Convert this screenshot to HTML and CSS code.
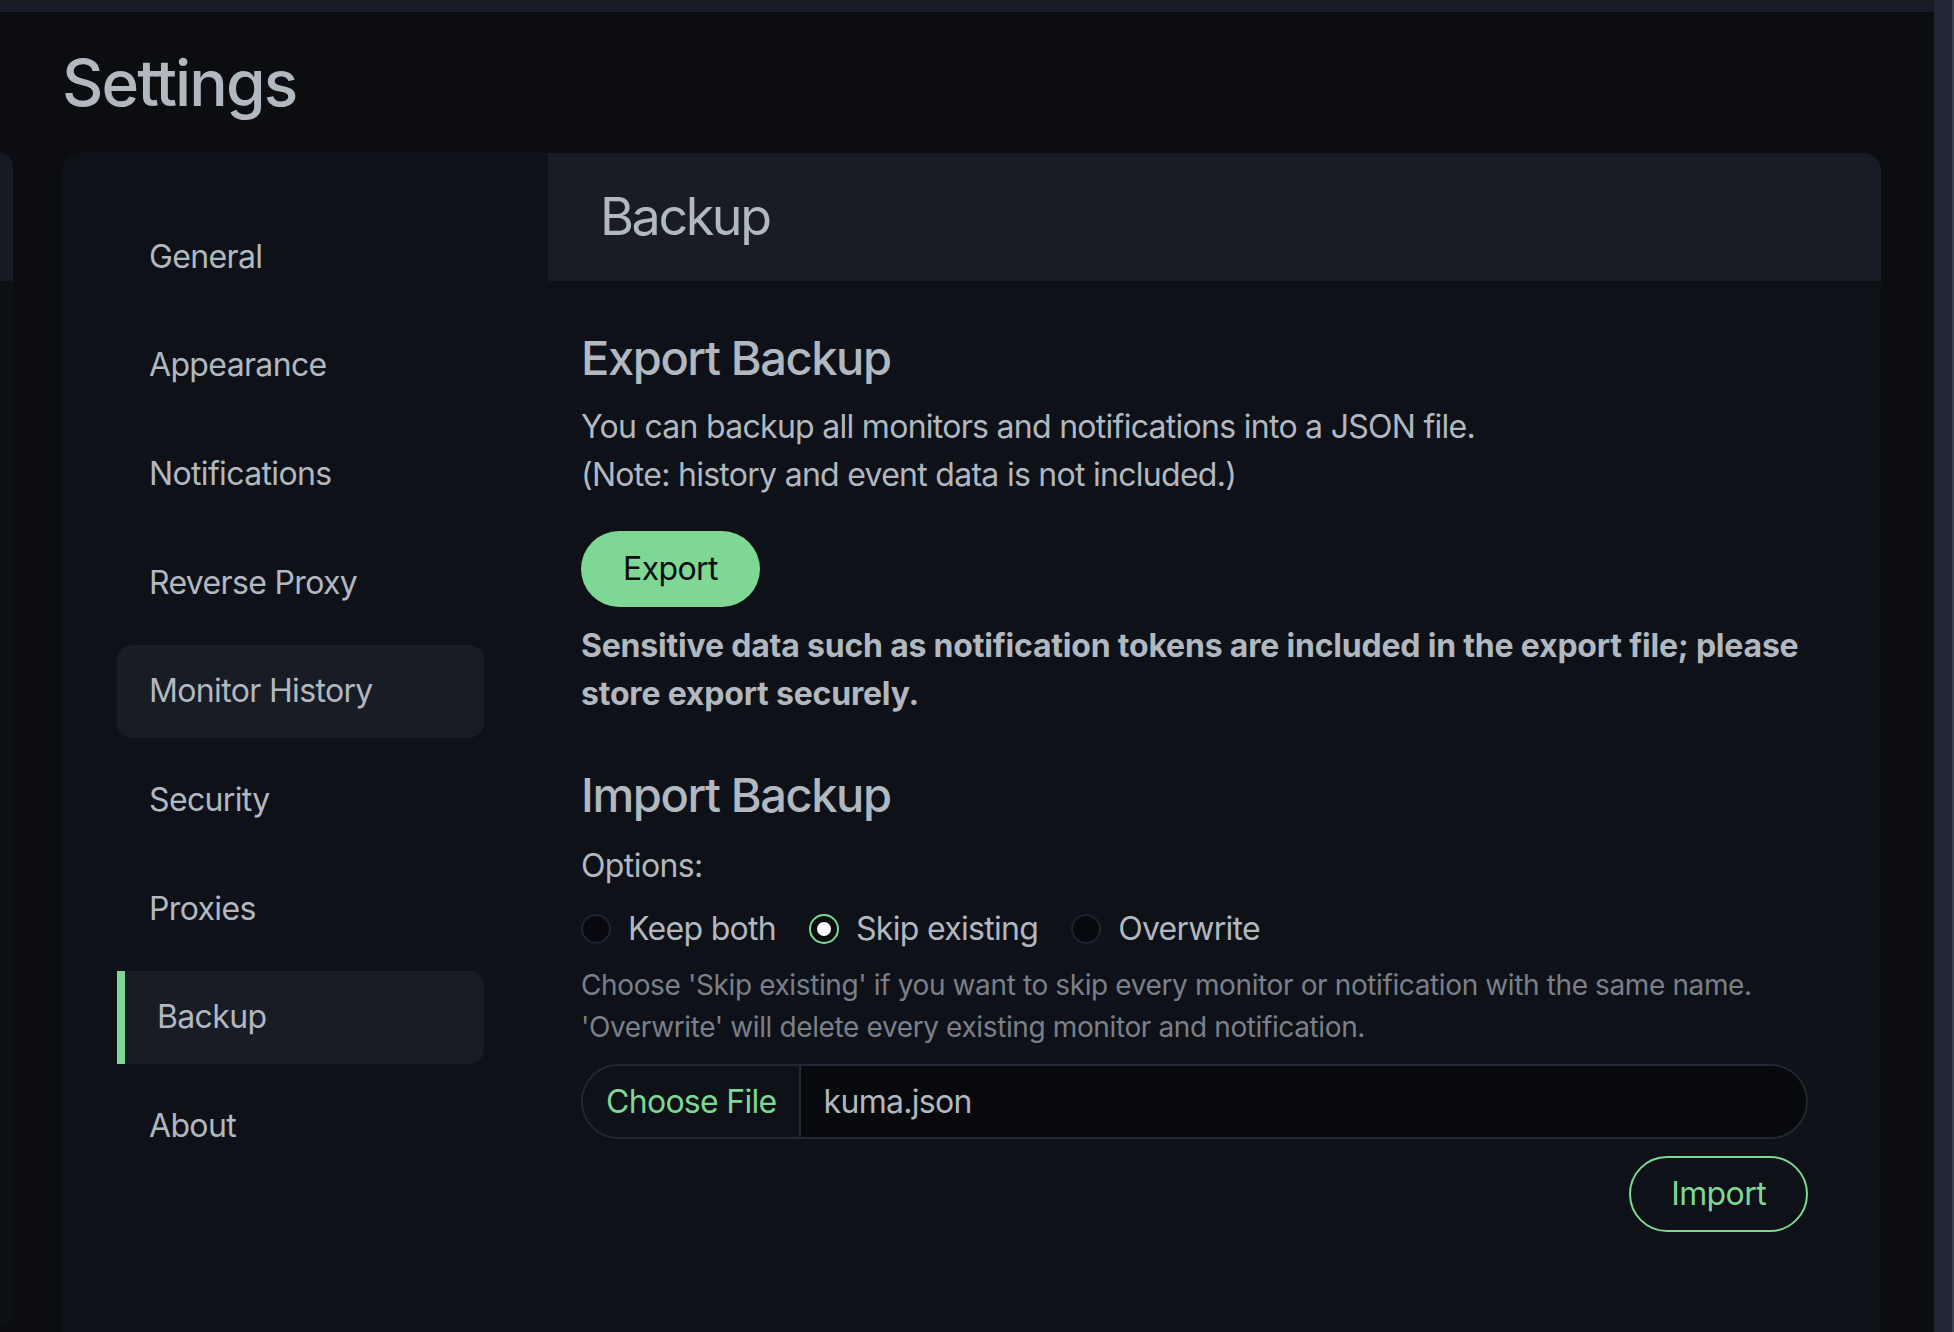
FILE: index.html
```html
<!DOCTYPE html>
<html lang="en">
<head>
<meta charset="utf-8">
<title>Settings - Backup</title>
<link rel="stylesheet" href="styles.css">
</head>
<body>
<div class="viewport">
  <div class="topbar"></div>
  <div class="layout">
    <div class="side-panel">
      <div class="side-panel-head"></div>
      <div class="side-panel-body"></div>
    </div>
    <main class="main">
      <h1 class="page-title">Settings</h1>
      <div class="card">
        <nav class="settings-menu">
          <div class="menu-item">General</div>
          <div class="menu-item">Appearance</div>
          <div class="menu-item">Notifications</div>
          <div class="menu-item">Reverse Proxy</div>
          <div class="menu-item hover">Monitor History</div>
          <div class="menu-item">Security</div>
          <div class="menu-item">Proxies</div>
          <div class="menu-item active">Backup</div>
          <div class="menu-item">About</div>
        </nav>
        <section class="settings-content">
          <div class="content-header">Backup</div>
          <div class="content-body">
            <h4 class="section-title">Export Backup</h4>
            <p class="text">You can backup all monitors and notifications into a JSON file.<br>(Note: history and event data is not included.)</p>
            <button class="btn btn-primary">Export</button>
            <p class="text warning">Sensitive data such as notification tokens are included in the export file; please store export securely.</p>

            <h4 class="section-title import-title">Import Backup</h4>
            <div class="label">Options:</div>
            <div class="radios">
              <label class="radio"><span class="radio-dot"></span><span>Keep both</span></label>
              <label class="radio"><span class="radio-dot checked"></span><span>Skip existing</span></label>
              <label class="radio"><span class="radio-dot"></span><span>Overwrite</span></label>
            </div>
            <div class="help">Choose 'Skip existing' if you want to skip every monitor or notification with the same name.<br>'Overwrite' will delete every existing monitor and notification.</div>
            <div class="file-input">
              <span class="file-btn">Choose File</span>
              <span class="file-name">kuma.json</span>
            </div>
            <div class="import-row">
              <button class="btn btn-outline">Import</button>
            </div>
          </div>
        </section>
      </div>
    </main>
  </div>
</div>
<div class="scrollbar"><div class="scrollbar-edge"></div></div>
</body>
</html>
```

FILE: styles.css
```css
html, body {
  margin: 0;
  height: 100%;
  overflow: hidden;
}
body {
  display: flex;
  background: #0b0d10;
  font-family: Inter, "Noto Sans", sans-serif;
  color: #b1b8c0;
}
.viewport {
  flex: 1;
  display: flex;
  flex-direction: column;
  min-width: 0;
}
.topbar {
  height: 12px;
  background: #181c25;
  flex: none;
}
.layout {
  display: flex;
  flex: 1;
}
.side-panel {
  width: 13px;
  margin-top: 141px;
  height: 1172px;
  display: flex;
  flex-direction: column;
  border-radius: 0 14px 14px 0;
  overflow: hidden;
  background: #0d1015;
  flex: none;
}
.side-panel-head {
  height: 128px;
  background: #161a22;
}
.main {
  flex: 1;
  margin-left: 49px;
  margin-right: 53px;
  padding-top: 33px;
  min-width: 0;
}
.page-title {
  margin: 0 0 31px 0;
  font-size: 64px;
  line-height: 1.2;
  font-weight: 500;
  letter-spacing: -1.9px;
  color: #b1b8c0;
}
.card {
  display: flex;
  background: #0e1117;
  border-radius: 18px;
  min-height: 1250px;
}
.settings-menu {
  width: 486px;
  flex: none;
  box-sizing: border-box;
  padding: 57.5px 64px 0 55px;
  display: flex;
  flex-direction: column;
  gap: 15.67px;
}
.menu-item {
  height: 93px;
  display: flex;
  align-items: center;
  padding-left: 32px;
  border-radius: 15px;
  font-size: 32px;
  line-height: 48px;
  letter-spacing: -0.65px;
  color: #b1b8c0;
}
.menu-item.hover {
  background: #181c25;
}
.menu-item.active {
  background: #181c25;
  border-left: 8px solid #7fd794;
  border-radius: 0 15px 15px 0;
}
.settings-content {
  flex: 1;
  min-width: 0;
}
.content-header {
  height: 128px;
  display: flex;
  align-items: center;
  padding: 0 52px;
  background: #181c25;
  border-radius: 0 18px 0 0;
  font-size: 52px;
  letter-spacing: -2.4px;
}
.content-body {
  padding: 49.5px 73px 0 33px;
}
.section-title {
  margin: 0;
  font-size: 47px;
  line-height: 1.2;
  font-weight: 500;
  letter-spacing: -1.4px;
}
.text {
  margin: 16px 0 0 0;
  font-size: 32px;
  line-height: 48px;
  letter-spacing: -0.72px;
}
.btn {
  font-family: inherit;
  font-size: 32px;
  line-height: 48px;
  letter-spacing: -0.6px;
  padding: 14px 42px;
  border-radius: 999px;
  cursor: pointer;
}
.btn-primary {
  margin-top: 32px;
  background: #7fd794;
  border: none;
  color: #0b0d10;
  height: 76px;
  display: block;
}
.text.warning {
  margin-top: 15.7px;
  font-weight: 700;
  letter-spacing: -0.2px;
}
.import-title {
  margin-top: 48.7px;
}
.label {
  margin-top: 19px;
  font-size: 32px;
  line-height: 48px;
  letter-spacing: -0.6px;
}
.radios {
  margin-top: 14.5px;
  display: flex;
  gap: 33px;
  font-size: 32px;
  line-height: 48px;
  letter-spacing: -0.7px;
}
.radio {
  display: flex;
  align-items: center;
  gap: 17px;
}
.radio-dot {
  width: 30px;
  height: 30px;
  box-sizing: border-box;
  border-radius: 50%;
  border: 2px solid #1e2430;
  background: #07090d;
  display: flex;
  align-items: center;
  justify-content: center;
}
.radio-dot.checked {
  border-color: #7fd794;
  background: #0b0d10;
}
.radio-dot.checked::after {
  content: "";
  width: 14px;
  height: 14px;
  border-radius: 50%;
  background: #ffffff;
}
.help {
  margin-top: 11px;
  font-size: 28px;
  line-height: 42px;
  letter-spacing: -0.38px;
  color: #7a8089;
}
.file-input {
  margin-top: 16.2px;
  height: 75px;
  box-sizing: border-box;
  border: 2px solid #212833;
  border-radius: 999px;
  display: flex;
  overflow: hidden;
  font-size: 32px;
  letter-spacing: -0.7px;
}
.file-btn {
  display: flex;
  align-items: center;
  padding: 0 22px 0 23px;
  color: #7fd794;
  background: #0e1117;
  border-right: 2px solid #212833;
}
.file-name {
  flex: 1;
  display: flex;
  align-items: center;
  padding-left: 23px;
  background: #07090c;
  color: #b1b8c0;
}
.import-row {
  margin-top: 17.2px;
  display: flex;
  justify-content: flex-end;
}
.btn-outline {
  height: 76px;
  background: transparent;
  border: 2px solid #7fd794;
  color: #7fd794;
  padding: 12px 40px;
}
.scrollbar {
  width: 20px;
  flex: none;
  background: #1f2634;
  display: flex;
  justify-content: flex-end;
}
.scrollbar-edge {
  width: 2px;
  background: #3b4252;
}
```
